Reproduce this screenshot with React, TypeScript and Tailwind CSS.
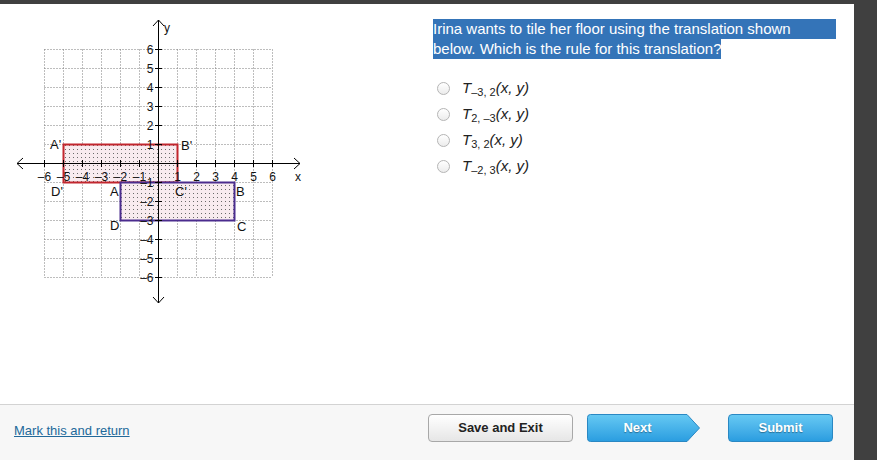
import React from 'react'

const U = 19
const OX = 158.5
const OY = 163.5
const range = [-6, -5, -4, -3, -2, -1, 0, 1, 2, 3, 4, 5, 6]
const font = '"Liberation Sans", Arial, sans-serif'

const lbl = (n: number) => (n < 0 ? '\u2013' + Math.abs(n) : String(n))

const Graph = () => {
    return (
        <svg width="320" height="400" className="block">
            <defs>
                <pattern id="dots" width="4" height="4" patternUnits="userSpaceOnUse">
                    <rect width="4" height="4" fill="#f8ebef" />
                    <rect x="1" y="1" width="1" height="1" fill="#6a6a6a" />
                </pattern>
            </defs>
            <g transform="translate(0,-4)" fontFamily={font}>
                {/* grid */}
                {range.map((i) => (
                    <g key={i}>
                        <line
                            x1={OX + i * U}
                            x2={OX + i * U}
                            y1={OY - 6 * U}
                            y2={OY + 6 * U}
                            stroke="#7a7a7a"
                            strokeDasharray="1 2"
                        />
                        <line
                            y1={OY + i * U}
                            y2={OY + i * U}
                            x1={OX - 6 * U}
                            x2={OX + 6 * U}
                            stroke="#7a7a7a"
                            strokeDasharray="1 2"
                        />
                    </g>
                ))}

                {/* image rectangle A'B'C'D' */}
                <rect
                    x={OX - 5 * U}
                    y={OY - U}
                    width={6 * U}
                    height={2 * U}
                    fill="url(#dots)"
                    stroke="#c2262e"
                    strokeWidth="2"
                />
                {/* pre-image ABCD */}
                <rect
                    x={OX - 2 * U}
                    y={OY + U}
                    width={6 * U}
                    height={2 * U}
                    fill="url(#dots)"
                    stroke="#4b2c8e"
                    strokeWidth="2"
                />

                {/* axes */}
                <line x1="17" x2="300" y1={OY} y2={OY} stroke="#000" />
                <line x1={OX} x2={OX} y1="20" y2="303" stroke="#000" />
                <polyline points={`23,${OY - 5.5} 17,${OY} 23,${OY + 5.5}`} fill="none" stroke="#000" />
                <polyline points={`294,${OY - 5.5} 300,${OY} 294,${OY + 5.5}`} fill="none" stroke="#000" />
                <polyline points={`${OX - 5.5},26 ${OX},20 ${OX + 5.5},26`} fill="none" stroke="#000" />
                <polyline points={`${OX - 5.5},297 ${OX},303 ${OX + 5.5},297`} fill="none" stroke="#000" />

                {range
                    .filter((i) => i !== 0)
                    .map((i) => (
                        <g key={'t' + i}>
                            <line x1={OX + i * U} x2={OX + i * U} y1={OY - 3.5} y2={OY + 3.5} stroke="#000" />
                            <line y1={OY - i * U} y2={OY - i * U} x1={OX - 3.5} x2={OX + 3.5} stroke="#000" />
                            <text x={OX + i * U} y={OY + 17} fontSize="12" textAnchor="middle" fill="#111">
                                {lbl(i)}
                            </text>
                            <text x={OX - 5} y={OY - i * U + 4.5} fontSize="12" textAnchor="end" fill="#111">
                                {lbl(i)}
                            </text>
                        </g>
                    ))}

                <text x="164" y="32" fontSize="12" fill="#111">y</text>
                <text x="295" y="181" fontSize="12" fill="#111">x</text>

                {/* vertex labels */}
                <g fontSize="13" fill="#111">
                    <text x="50" y="149">A'</text>
                    <text x="181" y="150">B'</text>
                    <text x="51" y="196">D'</text>
                    <text x="175" y="196">C'</text>
                    <text x="110" y="196">A</text>
                    <text x="236" y="196">B</text>
                    <text x="110" y="230">D</text>
                    <text x="237" y="231">C</text>
                </g>
            </g>
        </svg>
    )
}

const options = [
    ['\u20133, 2'],
    ['2, \u20133'],
    ['3, 2'],
    ['\u20132, 3'],
]

const App = () => {
    return (
        <div
            className="flex h-[460px] w-[877px] overflow-hidden bg-[#404040]"
            style={{ fontFamily: font }}
        >
            <div className="flex w-[854px] flex-col">
                <div className="h-[4px] bg-[#404040]" />
                <div className="flex flex-1 bg-white">
                    <div className="w-[433px]">
                        <Graph />
                    </div>
                    <div className="flex-1 pr-[18px] pt-[15px]">
                        <div className="text-[15px] leading-[20px] text-white">
                            <div className="h-[20px] bg-[#3474b8]">
                                Irina wants to tile her floor using the translation shown
                            </div>
                            <span className="inline-block h-[20px] bg-[#3474b8]">
                                below. Which is the rule for this translation?
                            </span>
                        </div>
                        <div className="mt-[16px] flex flex-col">
                            {options.map(([sub]) => (
                                <div key={sub} className="flex h-[26px] items-center">
                                    <span className="ml-[4px] h-[13px] w-[13px] rounded-full border border-[#b5b5b5] bg-gradient-to-b from-white to-[#ececec]" />
                                    <span className="ml-[12px] text-[15px] italic text-[#222]">
                                        T
                                        <sub className="text-[11px] not-italic">{sub}</sub>
                                        (x, y)
                                    </span>
                                </div>
                            ))}
                        </div>
                    </div>
                </div>
                <footer className="flex h-[56px] items-start justify-between border-t border-[#d3d3d3] bg-[#f7f7f7] pl-[14px] pr-[21px] pt-[9px]">
                    <a href="#" className="mt-[9px] text-[13px] leading-[16px] text-[#22699a] underline">
                        Mark this and return
                    </a>
                    <div className="flex items-center">
                        <button className="h-[28px] w-[145px] rounded-[4px] border border-[#a8a8a8] bg-gradient-to-b from-white to-[#e6e6e6] text-[13px] font-bold text-[#222]">
                            Save and Exit
                        </button>
                        <button className="relative ml-[14px] h-[28px] w-[113px] text-[13px] font-bold text-white [text-shadow:0_1px_1px_rgba(0,0,0,0.35)]">
                            <svg width="113" height="28" className="absolute left-0 top-0">
                                <defs>
                                    <linearGradient id="nextg" x1="0" y1="0" x2="0" y2="1">
                                        <stop offset="0" stopColor="#66c9f3" />
                                        <stop offset="1" stopColor="#2a9de0" />
                                    </linearGradient>
                                </defs>
                                <path
                                    d="M3.5,0.5 H100 L112.5,14 L100,27.5 H3.5 Q0.5,27.5 0.5,24.5 V3.5 Q0.5,0.5 3.5,0.5 Z"
                                    fill="url(#nextg)"
                                    stroke="#2a88c3"
                                />
                            </svg>
                            <span className="relative pr-[12px]">Next</span>
                        </button>
                        <button className="ml-[28px] h-[28px] w-[105px] rounded-[4px] border border-[#2a88c3] bg-gradient-to-b from-[#66c9f3] to-[#2a9de0] text-[13px] font-bold text-white [text-shadow:0_1px_1px_rgba(0,0,0,0.35)]">
                            Submit
                        </button>
                    </div>
                </footer>
            </div>
        </div>
    )
}

export default App
